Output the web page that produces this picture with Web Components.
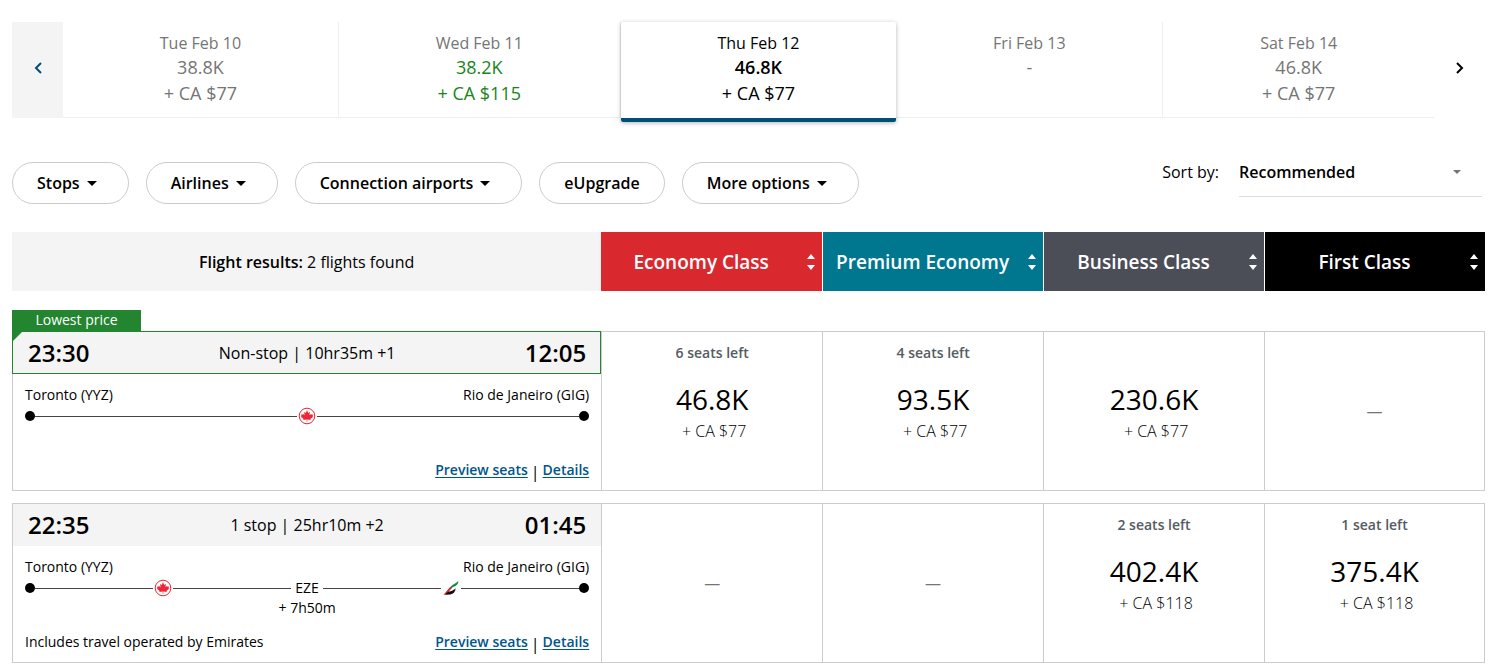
<!DOCTYPE html>
<html lang="en">
<head>
<meta charset="utf-8">
<meta name="viewport" content="width=device-width, initial-scale=1">
<title>Flight results</title>
<style>
  body {
    margin: 0;
    padding: 22px 15px 0 12px;
    background: #fff;
    color: #000;
    font-family: "Open Sans", "Noto Sans", sans-serif;
    font-size: 16px;
    line-height: 20px;
  }
</style>
</head>
<body>

<date-carousel>
  <date-tab day="Tue Feb 10" points="38.8K" cash="+ CA $77"></date-tab>
  <date-tab day="Wed Feb 11" points="38.2K" cash="+ CA $115" lowest></date-tab>
  <date-tab day="Thu Feb 12" points="46.8K" cash="+ CA $77" selected></date-tab>
  <date-tab day="Fri Feb 13" points="-"></date-tab>
  <date-tab day="Sat Feb 14" points="46.8K" cash="+ CA $77"></date-tab>
</date-carousel>

<results-toolbar>
  <filter-pill menu>Stops</filter-pill>
  <filter-pill menu>Airlines</filter-pill>
  <filter-pill menu>Connection airports</filter-pill>
  <filter-pill>eUpgrade</filter-pill>
  <filter-pill menu>More options</filter-pill>
  <sort-select slot="sort"></sort-select>
</results-toolbar>

<flight-results></flight-results>

<script>
/* One day in the date strip */
class DateTab extends HTMLElement {
  constructor() {
    super();
    this.attachShadow({ mode: 'open' });
  }

  connectedCallback() {
    const cash = this.getAttribute('cash');
    this.shadowRoot.innerHTML = `
      <style>
        :host {
          display: flex;
          flex: 1 1 auto;
          box-sizing: border-box;
          border-right: 1px solid #eee;
          border-bottom: 1px solid #eee;
          color: #757575;
        }
        :host(:last-of-type) { border-right: 0; }
        :host([selected]) {
          color: #000;
          position: relative;
          border-right: 0;
          border-bottom: 4px solid #004f78;
          border-radius: 2px;
          margin-bottom: -4px;
          box-shadow: 0 1px 4px rgba(0, 0, 0, .3);
        }
        button {
          flex: 1;
          display: flex;
          flex-direction: column;
          align-items: center;
          padding: 9px 0 0;
          border: 0;
          background: none;
          color: inherit;
          font: inherit;
          cursor: pointer;
        }
        .day { line-height: 24px; }
        .points { font-size: 18px; line-height: 25px; }
        .cash { font-size: 18px; line-height: 26px; }
        :host([lowest]) .points, :host([lowest]) .cash { color: #188518; }
        :host([selected]) .points { font-weight: 600; }
      </style>
      <button type="button">
        <span class="day">${this.getAttribute('day')}</span>
        <span class="points">${this.getAttribute('points')}</span>
        ${cash ? `<span class="cash">${cash}</span>` : ''}
      </button>
    `;
  }
}

/* Date strip with previous / next buttons */
class DateCarousel extends HTMLElement {
  constructor() {
    super();
    this.attachShadow({ mode: 'open' });
    this.shadowRoot.innerHTML = `
      <style>
        :host { display: flex; min-height: 96px; }
        .days { flex: 1; display: flex; }
        .nav {
          flex: none;
          width: 51px;
          padding: 0 0 4px;
          border: 0;
          display: flex;
          align-items: center;
          justify-content: center;
          background: none;
          color: #000;
          cursor: pointer;
        }
        .prev { background: #f4f4f4; color: #004f78; }
        svg { fill: none; stroke: currentColor; stroke-width: 2; }
      </style>
      <button class="nav prev" type="button" aria-label="Previous dates">
        <svg width="8" height="12" viewBox="0 0 8 12"><path d="M7 1L2 6l5 5"/></svg>
      </button>
      <div class="days"><slot></slot></div>
      <button class="nav next" type="button" aria-label="Next dates">
        <svg width="8" height="12" viewBox="0 0 8 12"><path d="M1 1l5 5-5 5"/></svg>
      </button>
    `;
  }
}

/* Rounded filter button, with a caret when it opens a menu */
class FilterPill extends HTMLElement {
  constructor() {
    super();
    this.attachShadow({ mode: 'open' });
  }

  connectedCallback() {
    const caret = `<svg width="10" height="5" viewBox="0 0 10 5"><path d="M0 0h10L5 5z"/></svg>`;
    this.shadowRoot.innerHTML = `
      <style>
        :host { display: block; }
        button {
          display: flex;
          align-items: center;
          gap: 7px;
          height: 42px;
          padding: 0 24px;
          border: 1px solid #ccc;
          border-radius: 21px;
          background: #fff;
          color: #000;
          font: inherit;
          font-weight: 600;
          white-space: nowrap;
          cursor: pointer;
        }
        :host([menu]) button { padding-right: 31px; }
      </style>
      <button type="button"><slot></slot>${this.hasAttribute('menu') ? caret : ''}</button>
    `;
  }
}

class SortSelect extends HTMLElement {
  constructor() {
    super();
    this.attachShadow({ mode: 'open' });
    this.shadowRoot.innerHTML = `
      <style>
        :host { display: flex; align-items: center; gap: 20px; }
        .field {
          display: grid;
          align-items: center;
          width: 243px;
          height: 49px;
          border-bottom: 1px solid #ddd;
        }
        select, svg { grid-area: 1 / 1; }
        select {
          appearance: none;
          width: 100%;
          height: 100%;
          padding: 0;
          border: 0;
          background: none;
          color: #000;
          font: inherit;
          font-weight: 600;
          cursor: pointer;
        }
        svg { justify-self: end; margin-right: 21px; fill: #757575; pointer-events: none; }
      </style>
      <label for="sort">Sort by:</label>
      <div class="field">
        <select id="sort">
          <option>Recommended</option>
          <option>Departure time</option>
          <option>Duration</option>
        </select>
        <svg width="8" height="4" viewBox="0 0 8 4"><path d="M0 0h8L4 4z"/></svg>
      </div>
    `;
  }
}

class ResultsToolbar extends HTMLElement {
  constructor() {
    super();
    this.attachShadow({ mode: 'open' });
    this.shadowRoot.innerHTML = `
      <style>
        :host {
          display: flex;
          justify-content: space-between;
          align-items: flex-start;
          margin: 29px 3px 28px 0;
        }
        .filters { display: flex; gap: 17px; padding-top: 15px; }
      </style>
      <div class="filters"><slot></slot></div>
      <slot name="sort"></slot>
    `;
  }
}

/* Small carrier logo shown on the route line */
class CarrierLogo extends HTMLElement {
  constructor() {
    super();
    this.attachShadow({ mode: 'open' });
  }

  connectedCallback() {
    const logos = {
      ac: `
        <svg width="18" height="18" viewBox="0 0 18 18" role="img" aria-label="Air Canada">
          <circle cx="9" cy="9" r="7.8" fill="#fff" stroke="#ef2635" stroke-width="1"/>
          <path fill="#ef2635" d="M9 3.300l1.300 2.700 1.700-.9-.6 3.100 1.700-1.400.4.900 1.700-.2-.7 1.700.7.600-2.800 2.100.3 1.200-3.400-.5v2.200h-.6v-2.200l-3.400.5.3-1.200-2.800-2.100.7-.6-.7-1.700 1.700.2.400-.9 1.700 1.400L6 5.100l1.700.9z"/>
        </svg>`,
      ek: `
        <svg width="18" height="16" viewBox="0 0 18 16" role="img" aria-label="Emirates">
          <path fill="#e3242b" d="M1.500 14.800C4.500 12 6 8.500 9.500 6l1 1.500C8 9.500 6.500 13 4 14.800z"/>
          <path fill="#148a43" d="M8.500 7.500C10.500 4 14 3.500 16.500 1c-.3 3-1.800 4.600-4.200 5.600-1.800.7-3 1.100-4.100 2.400z"/>
          <path fill="#111" d="M3.500 14.800C5 11.500 8 11.800 10.500 10.600c1.300-.6 2.300-1.300 3.200-2.300-.2 3.400-2.200 5.600-5.400 6.300z"/>
        </svg>`
    };
    this.shadowRoot.innerHTML = `
      <style>
        :host { display: flex; flex: none; margin: 0 1px; }
      </style>
      ${logos[this.getAttribute('code')]}
    `;
  }
}

/* Times, route line and links of one itinerary */
class FlightSummary extends HTMLElement {
  constructor() {
    super();
    this.attachShadow({ mode: 'open' });
  }

  set flight(f) {
    const track = f.legs
      .map(code => `<i class="line"></i><carrier-logo code="${code}"></carrier-logo><i class="line"></i>`)
      .join(`<span class="stop">${f.stop}</span>`);

    this.shadowRoot.innerHTML = `
      <style>
        :host {
          display: block;
          border: 1px solid #ccc;
          border-right: 0;
          text-align: left;
        }
        .head {
          display: flex;
          align-items: center;
          justify-content: space-between;
          box-sizing: border-box;
          height: 43px;
          margin: -1px 0 0 -1px;
          padding: 0 15px;
          border: 1px solid #ccc;
          border-width: 1px 0 0 1px;
          background: #f4f4f4;
        }
        :host([lowest]) .head { border: 1px solid #23852f; padding-right: 14px; }
        time { font-size: 24px; line-height: 32px; font-weight: 600; }
        .body { padding: 11px 12px 6px; font-size: 14px; }
        .row { display: flex; justify-content: space-between; }
        .track { display: flex; align-items: center; height: 22px; }
        .dot { width: 10px; height: 10px; border-radius: 50%; background: #000; }
        .line { flex: 1; height: 1px; background: #444; }
        .stop { padding: 0 4px; }
        .layover { height: 18px; line-height: 18px; text-align: center; }
        .links { margin-top: 15px; }
        .sep { font-size: 16px; line-height: 24px; }
        nav { display: flex; gap: 3px; }
        a { color: #00558c; font-weight: 600; text-underline-offset: 2px; }
      </style>
      <div class="head">
        <time>${f.departs}</time>
        <span>${f.duration}</span>
        <time>${f.arrives}</time>
      </div>
      <div class="body">
        <div class="row"><span>${f.from}</span><span>${f.to}</span></div>
        <div class="track"><i class="dot"></i>${track}<i class="dot"></i></div>
        <div class="layover">${f.layover || ''}</div>
        <div class="row links">
          <span>${f.note || ''}</span>
          <nav><a href="#seats">Preview seats</a><span class="sep">|</span><a href="#details">Details</a></nav>
        </div>
      </div>
    `;
  }
}

/* Price in one cabin */
class FareCell extends HTMLElement {
  constructor() {
    super();
    this.attachShadow({ mode: 'open' });
  }

  connectedCallback() {
    const points = this.getAttribute('points');
    this.shadowRoot.innerHTML = `
      <style>
        :host { display: flex; flex-direction: column; text-align: center; }
        .seats { height: 20px; font-size: 14px; font-weight: 600; color: #555b63; }
        .points { margin-top: 16px; font-size: 28px; line-height: 40px; }
        .cash { padding-left: 4px; line-height: 24px; font-weight: 300; }
        .none { color: #757575; }
      </style>
      ${points ? `
        <span class="seats">${this.getAttribute('seats')}</span>
        <span class="points">${points}</span>
        <span class="cash">${this.getAttribute('cash')}</span>
      ` : '<span class="none">—</span>'}
    `;
  }
}

/* Results table: one row per itinerary, one column per cabin */
class FlightResults extends HTMLElement {
  constructor() {
    super();
    this.attachShadow({ mode: 'open' });

    this.cabins = [
      { name: 'Economy Class', color: '#d9292f' },
      { name: 'Premium Economy', color: '#00778f' },
      { name: 'Business Class', color: '#4b4e57' },
      { name: 'First Class', color: '#000' }
    ];

    this.flights = [
      {
        lowest: true,
        departs: '23:30', arrives: '12:05', duration: 'Non-stop | 10hr35m +1',
        from: 'Toronto (YYZ)', to: 'Rio de Janeiro (GIG)', legs: ['ac'],
        fares: [
          { seats: '6 seats left', points: '46.8K', cash: '+ CA $77' },
          { seats: '4 seats left', points: '93.5K', cash: '+ CA $77' },
          { seats: '', points: '230.6K', cash: '+ CA $77' },
          null
        ]
      },
      {
        departs: '22:35', arrives: '01:45', duration: '1 stop | 25hr10m +2',
        from: 'Toronto (YYZ)', to: 'Rio de Janeiro (GIG)', legs: ['ac', 'ek'],
        stop: 'EZE', layover: '+ 7h50m', note: 'Includes travel operated by Emirates',
        fares: [
          null,
          null,
          { seats: '2 seats left', points: '402.4K', cash: '+ CA $118' },
          { seats: '1 seat left', points: '375.4K', cash: '+ CA $118' }
        ]
      }
    ];
  }

  connectedCallback() {
    this.render();
    this.shadowRoot.querySelectorAll('flight-summary').forEach((el, i) => {
      el.flight = this.flights[i];
    });
  }

  fare(f) {
    if (!f) return '<td class="fare empty"><fare-cell></fare-cell></td>';
    return `<td class="fare"><fare-cell seats="${f.seats}" points="${f.points}" cash="${f.cash}"></fare-cell></td>`;
  }

  row(f) {
    const lead = f.lowest
      ? '<tr><td class="flag" colspan="5"><span>Lowest price</span></td></tr>'
      : '<tr><td class="gap" colspan="5"></td></tr>';
    return `
      ${lead}
      <tr>
        <td class="summary"><flight-summary ${f.lowest ? 'lowest' : ''}></flight-summary></td>
        ${f.fares.map(this.fare).join('')}
      </tr>`;
  }

  render() {
    this.shadowRoot.innerHTML = `
      <style>
        :host { display: block; }
        table { width: 100%; table-layout: fixed; border-collapse: separate; border-spacing: 0; }
        th, td { padding: 0; }
        th { height: 59px; font-weight: 400; background: #f4f4f4; }
        th:first-child { width: 40%; }
        th b { font-weight: 600; }
        .cabin + .cabin { border-left: 1px solid #fff; }
        .cabin button {
          display: flex;
          align-items: center;
          gap: 5px;
          width: 100%;
          padding: 0 6px 0 0;
          border: 0;
          background: none;
          color: #fff;
          font: inherit;
          font-size: 19px;
          font-weight: 600;
          line-height: 24px;
          cursor: pointer;
        }
        .cabin span { flex: 1; white-space: nowrap; }
        .cabin svg { flex: none; fill: #fff; }

        .gap { height: 12px; }
        .flag { padding-top: 19px; }
        .flag span {
          position: relative;
          display: block;
          width: 129px;
          height: 21px;
          background: #23852f;
          color: #fff;
          font-size: 14px;
          text-align: center;
        }
        /* folded corner that hangs over the card */
        .flag span::after {
          content: "";
          position: absolute;
          top: 100%;
          left: 0;
          border-top: 11px solid #23852f;
          border-right: 11px solid transparent;
        }

        .summary { vertical-align: top; }
        .fare {
          border: 1px solid #ccc;
          border-right: 0;
          padding-top: 11px;
          vertical-align: top;
        }
        .fare:last-child { border-right: 1px solid #ccc; }
        .fare.empty { padding-top: 0; vertical-align: middle; }
      </style>
      <table>
        <thead>
          <tr>
            <th scope="col"><b>Flight results:</b> 2 flights found</th>
            ${this.cabins.map(c => `
              <th scope="col" class="cabin" style="background:${c.color}">
                <button type="button">
                  <span>${c.name}</span>
                  <svg width="10" height="16" viewBox="0 0 10 16"><path d="M5 0l4 5H1zM5 16l4-5H1z"/></svg>
                </button>
              </th>`).join('')}
          </tr>
        </thead>
        <tbody>${this.flights.map(f => this.row(f)).join('')}</tbody>
      </table>
    `;
  }
}

customElements.define('date-tab', DateTab);
customElements.define('date-carousel', DateCarousel);
customElements.define('filter-pill', FilterPill);
customElements.define('sort-select', SortSelect);
customElements.define('results-toolbar', ResultsToolbar);
customElements.define('carrier-logo', CarrierLogo);
customElements.define('flight-summary', FlightSummary);
customElements.define('fare-cell', FareCell);
customElements.define('flight-results', FlightResults);
</script>
</body>
</html>
